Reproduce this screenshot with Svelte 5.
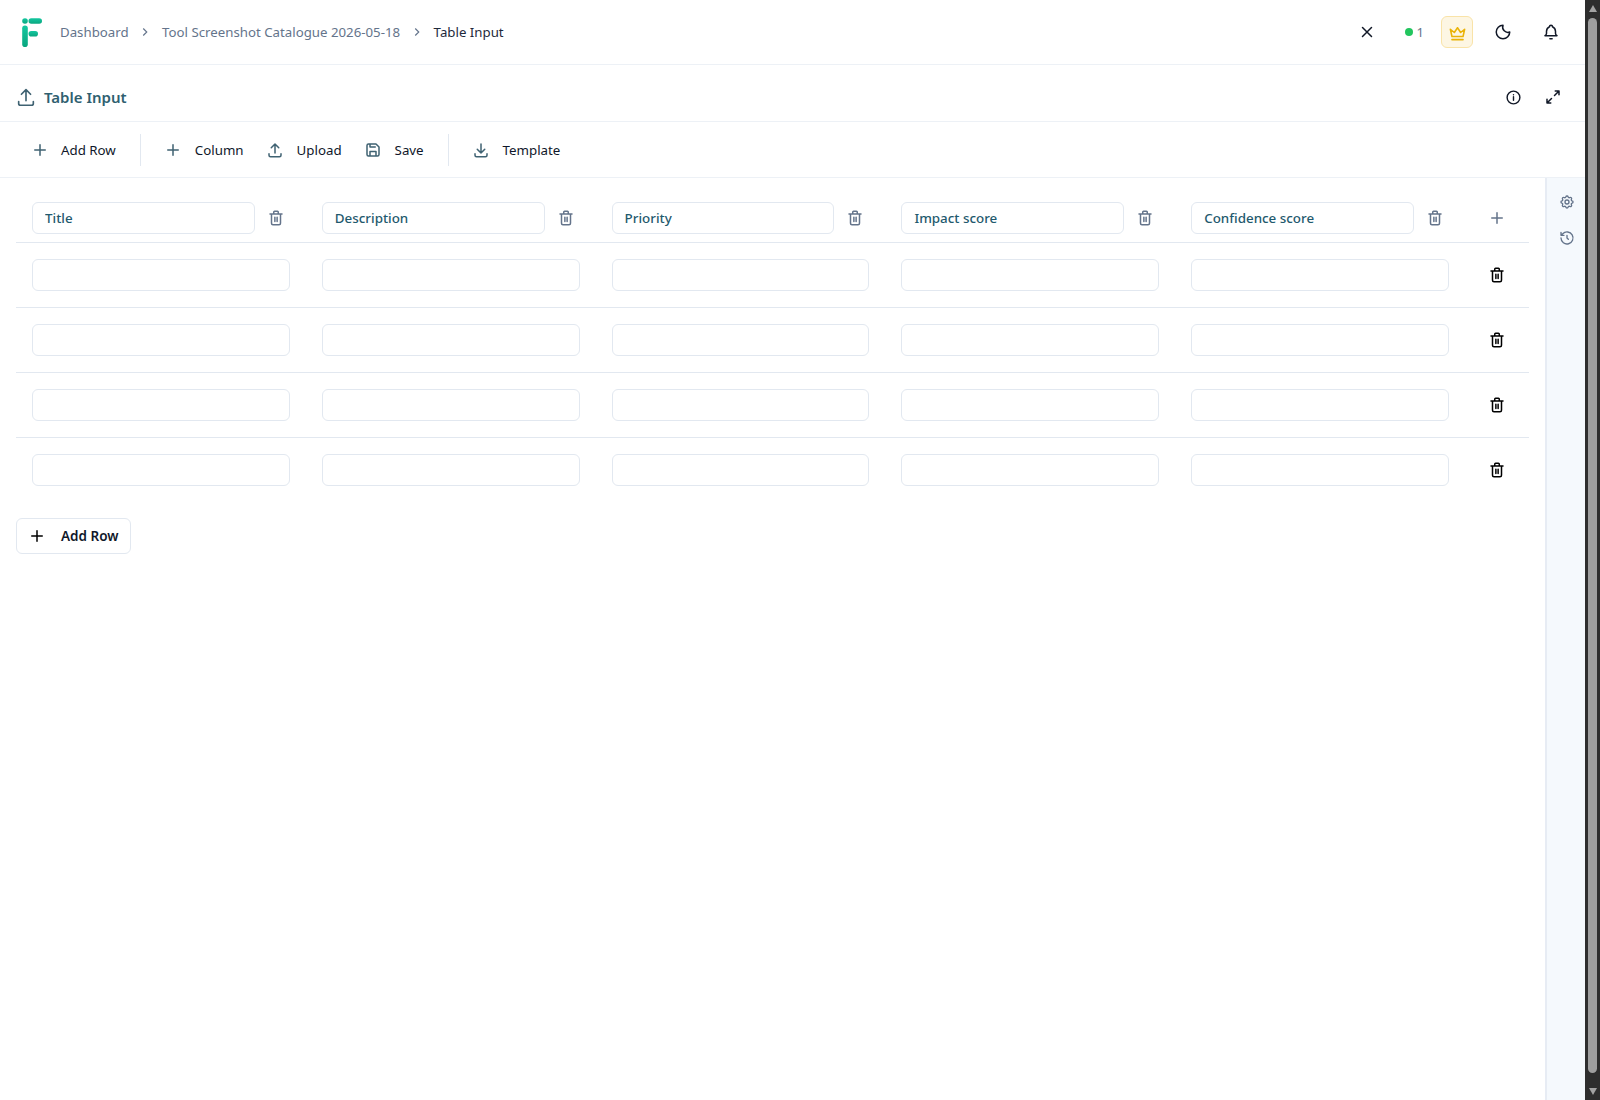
<script lang="ts">
  const crumbs = ['Dashboard', 'Tool Screenshot Catalogue 2026-05-18'];
  const columns = ['Title', 'Description', 'Priority', 'Impact score', 'Confidence score'];
  const rows = [0, 1, 2, 3];
</script>

{#snippet plus()}
  <svg class="ico" viewBox="0 0 24 24"><path d="M12 5v14M5 12h14" /></svg>
{/snippet}

{#snippet upload(cls = 'ico')}
  <svg class={cls} viewBox="0 0 24 24"><path d="M4 17v2a2 2 0 0 0 2 2h12a2 2 0 0 0 2-2v-2M7 9l5-5 5 5M12 4v12" /></svg>
{/snippet}

{#snippet trash(cls = 'ico')}
  <svg class={cls} viewBox="0 0 24 24"><path d="M4 6.5h16M9 6V4a1 1 0 0 1 1-1h4a1 1 0 0 1 1 1v2M6 6.5V19a2 2 0 0 0 2 2h8a2 2 0 0 0 2-2V6.5M10.5 11v5.5M13.5 11v5.5" /></svg>
{/snippet}

<div class="page">
  <div class="main">
    <header class="topbar">
      <svg class="logo" viewBox="0 0 20 29">
        <defs>
          <linearGradient id="lg" x1="0" y1="0" x2="0" y2="1">
            <stop offset="0" stop-color="#14c7a0" />
            <stop offset="1" stop-color="#0aa67f" />
          </linearGradient>
        </defs>
        <circle cx="3" cy="3" r="2.8" fill="url(#lg)" />
        <rect x="6.5" y="0.2" width="13.5" height="5.6" rx="2.8" fill="url(#lg)" />
        <rect x="0.2" y="7.5" width="5.6" height="21.5" rx="2.8" fill="url(#lg)" />
        <rect x="6.5" y="13" width="9.5" height="5.6" rx="2.8" fill="url(#lg)" />
      </svg>
      <nav class="crumbs">
        {#each crumbs as crumb}
          <span class="crumb">{crumb}</span>
          <svg class="chev" viewBox="0 0 24 24"><path d="M9 6l6 6-6 6" /></svg>
        {/each}
        <span class="crumb current">Table Input</span>
      </nav>
      <div class="top-actions">
        <svg class="ico dark close" viewBox="0 0 24 24"><path d="M18 6L6 18M6 6l12 12" /></svg>
        <span class="status"><i class="dot"></i>1</span>
        <span class="crown">
          <svg class="ico" viewBox="0 0 24 24"><path d="M12 6l4 6 5-4-2 9H5L3 8l5 4zM5 21h14" /></svg>
        </span>
        <svg class="ico dark moon" viewBox="0 0 24 24"><path d="M12 3a7 7 0 0 0 9 9 9 9 0 1 1-9-9z" /></svg>
        <svg class="ico dark bell" viewBox="0 0 24 24"><path d="M10 5a2 2 0 1 1 4 0 7 7 0 0 1 4 6v3a4 4 0 0 0 2 3H4a4 4 0 0 0 2-3v-3a7 7 0 0 1 4-6M10.5 21h3" /></svg>
      </div>
    </header>

    <div class="titlebar">
      {@render upload('ico title-ico')}
      <h1>Table Input</h1>
      <div class="title-actions">
        <svg class="ico dark info" viewBox="0 0 24 24"><circle cx="12" cy="12" r="9" /><path d="M12 11v5M12 8v.01" /></svg>
        <svg class="ico dark" viewBox="0 0 24 24"><path d="M15 4h5v5M20 4l-6 6M9 20H4v-5M4 20l6-6" /></svg>
      </div>
    </div>

    <div class="toolbar">
      <button class="tool">{@render plus()}Add Row</button>
      <span class="divider"></span>
      <button class="tool">{@render plus()}Column</button>
      <button class="tool">{@render upload()}Upload</button>
      <button class="tool">
        <svg class="ico" viewBox="0 0 24 24"><path d="M6 4h10l4 4v10a2 2 0 0 1-2 2H6a2 2 0 0 1-2-2V6a2 2 0 0 1 2-2zM8 20v-6h8v6M8 4v4h7" /></svg>
        Save
      </button>
      <span class="divider"></span>
      <button class="tool">
        <svg class="ico" viewBox="0 0 24 24"><path d="M4 17v2a2 2 0 0 0 2 2h12a2 2 0 0 0 2-2v-2M7 11l5 5 5-5M12 4v12" /></svg>
        Template
      </button>
    </div>

    <div class="body">
      <div class="content">
        <div class="grid head">
          {#each columns as col}
            <div class="cell">
              <input class="field head-field" value={col} />
              <button class="icon-btn">{@render trash('ico muted')}</button>
            </div>
          {/each}
          <div class="action"><button class="icon-btn">{@render plus()}</button></div>
        </div>
        {#each rows as row (row)}
          <div class="grid row">
            {#each columns as col}
              <div class="cell"><input class="field" aria-label={col} /></div>
            {/each}
            <div class="action"><button class="icon-btn">{@render trash('ico black')}</button></div>
          </div>
        {/each}
        <button class="add-row">
          <svg class="ico black" viewBox="0 0 24 24"><path d="M12 5v14M5 12h14" /></svg>
          Add Row
        </button>
      </div>
      <aside class="side">
        <svg class="ico side-ico" viewBox="0 0 24 24"><path d="M10.3 4.3c.4-1.8 3-1.8 3.4 0a1.7 1.7 0 0 0 2.6 1c1.5-.9 3.3.8 2.4 2.4a1.7 1.7 0 0 0 1 2.6c1.8.4 1.8 3 0 3.4a1.7 1.7 0 0 0-1 2.6c.9 1.5-.8 3.3-2.4 2.4a1.7 1.7 0 0 0-2.6 1c-.4 1.8-3 1.8-3.4 0a1.7 1.7 0 0 0-2.6-1c-1.5.9-3.3-.8-2.4-2.4a1.7 1.7 0 0 0-1-2.6c-1.8-.4-1.8-3 0-3.4a1.7 1.7 0 0 0 1-2.6c-.9-1.5.8-3.3 2.4-2.4 1 .6 2.3.1 2.6-1z" /><circle cx="12" cy="12" r="3" /></svg>
        <svg class="ico side-ico" viewBox="0 0 24 24"><path d="M12 8v4l2 2M3 12a9 9 0 1 0 2.6-6.4L3 8M3 3.5V8h4.5" /></svg>
      </aside>
    </div>
  </div>

  <div class="scrollbar">
    <span class="arrow up"></span>
    <span class="thumb"></span>
    <span class="arrow down"></span>
  </div>
</div>

<style>
  :global(body) {
    margin: 0;
    background: #fff;
    font-family: 'Noto Sans', 'Open Sans', sans-serif;
    color: #0f172a;
  }

  .page {
    display: flex;
    height: 1100px;
    overflow: hidden;
  }

  .main {
    flex: 1;
    min-width: 0;
    display: flex;
    flex-direction: column;
  }

  .ico {
    width: 18px;
    height: 18px;
    flex-shrink: 0;
    fill: none;
    stroke: #3f6272;
    stroke-width: 2;
    stroke-linecap: round;
    stroke-linejoin: round;
  }

  .ico.dark {
    stroke: #111827;
  }

  .ico.black {
    stroke: #000;
  }

  .ico.muted {
    stroke: #64748b;
  }

  .topbar {
    display: flex;
    align-items: center;
    height: 65px;
    box-sizing: border-box;
    padding: 0 25px 0 22px;
    border-bottom: 1px solid #edf1f6;
    flex-shrink: 0;
  }

  .logo {
    width: 20px;
    height: 29px;
    margin-right: 18px;
  }

  .crumbs {
    display: flex;
    align-items: center;
    font-size: 13.25px;
  }

  .crumb {
    color: #64748b;
  }

  .crumb.current {
    color: #1e293b;
  }

  .chev {
    width: 14px;
    height: 14px;
    margin: 0 10px 0 9.5px;
    fill: none;
    stroke: #64748b;
    stroke-width: 2;
  }

  .top-actions {
    margin-left: auto;
    display: flex;
    align-items: center;
  }

  .ico.close {
    margin-right: 29px;
  }

  .status {
    display: flex;
    align-items: center;
    gap: 4px;
    font-size: 13px;
    color: #64748b;
    margin-right: 17px;
  }

  .dot {
    width: 8px;
    height: 8px;
    border-radius: 50%;
    background: #22c55e;
  }

  .crown {
    width: 32px;
    height: 32px;
    box-sizing: border-box;
    display: flex;
    align-items: center;
    justify-content: center;
    background: #fdf6e3;
    border: 1px solid #f9e3a8;
    border-radius: 6px;
    margin-right: 21px;
  }

  .crown .ico {
    width: 19px;
    height: 19px;
    stroke: #eab308;
  }

  .moon {
    margin-right: 30px;
  }

  .titlebar {
    display: flex;
    align-items: center;
    height: 57px;
    box-sizing: border-box;
    padding: 8px 23px 0 15px;
    border-bottom: 1px solid #edf1f6;
    flex-shrink: 0;
  }

  .title-ico {
    width: 22px;
    height: 22px;
    margin-right: 7px;
    stroke-width: 1.8;
  }

  h1 {
    margin: 0;
    font-size: 15px;
    font-weight: 600;
    color: #2f5f70;
  }

  .title-actions {
    margin-left: auto;
    display: flex;
    align-items: center;
    gap: 22.5px;
  }

  .info {
    width: 17px;
    height: 17px;
  }

  .toolbar {
    display: flex;
    align-items: center;
    height: 56px;
    box-sizing: border-box;
    padding: 0 20px;
    border-bottom: 1px solid #edf1f6;
    flex-shrink: 0;
  }

  .tool {
    display: flex;
    align-items: center;
    gap: 13px;
    padding: 0 11px;
    height: 32px;
    background: none;
    border: none;
    font: inherit;
    font-size: 13.3px;
    color: #0f172a;
  }

  .tool:first-child {
    gap: 12px;
  }

  .divider {
    width: 1px;
    height: 32px;
    margin: 0 12px 0 13px;
    background: #e2e8f0;
  }

  .body {
    flex: 1;
    display: flex;
    min-height: 0;
  }

  .content {
    flex: 1;
    min-width: 0;
    padding: 8px 16px;
  }

  .grid {
    display: grid;
    grid-template-columns: repeat(5, minmax(0, 1fr)) 64px;
    align-items: center;
  }

  .head {
    padding: 16px 0 8px;
    border-bottom: 1px solid #e2e8f0;
  }

  .row {
    padding: 16px 0;
    border-bottom: 1px solid #e2e8f0;
  }

  .row:last-of-type {
    border-bottom: none;
  }

  .cell {
    display: flex;
    align-items: center;
    gap: 7px;
    padding: 0 16px;
    min-width: 0;
  }

  .action {
    display: flex;
    justify-content: center;
  }

  .field {
    flex: 1;
    min-width: 0;
    height: 32px;
    box-sizing: border-box;
    padding: 0 12px;
    background: #fff;
    border: 1px solid #e2e8f0;
    border-radius: 6px;
    font: inherit;
    font-size: 13.4px;
    color: #1f5a6e;
  }

  .head-field {
    font-weight: 500;
  }

  .icon-btn {
    display: flex;
    padding: 5px;
    background: none;
    border: none;
  }

  .action .icon-btn .ico:not(.black) {
    stroke: #64748b;
  }

  .add-row {
    display: flex;
    align-items: center;
    gap: 15px;
    height: 36px;
    margin-top: 16px;
    padding: 0 12px 0 11px;
    background: #fff;
    border: 1px solid #e2e8f0;
    border-radius: 6px;
    font: inherit;
    font-size: 13.5px;
    font-weight: 600;
    color: #0f172a;
  }

  .side {
    width: 40px;
    box-sizing: border-box;
    display: flex;
    flex-direction: column;
    align-items: center;
    gap: 20px;
    padding: 16px 0 0 2px;
    background: #f5f9fd;
    border-left: 2px solid #e7ecf4;
  }

  .ico.side-ico {
    width: 16px;
    height: 16px;
    stroke: #64748b;
  }

  .scrollbar {
    width: 15px;
    flex-shrink: 0;
    background: #2e2e2e;
    display: flex;
    flex-direction: column;
    align-items: center;
    box-sizing: border-box;
    padding: 5px 0;
  }

  .thumb {
    width: 9px;
    flex: 1;
    margin: 6px 0 15px;
    background: #9f9f9f;
    border-radius: 5px;
  }

  .arrow {
    width: 0;
    height: 0;
    border-left: 4px solid transparent;
    border-right: 4px solid transparent;
  }

  .arrow.up {
    border-bottom: 7px solid #a3a3a3;
  }

  .arrow.down {
    border-top: 7px solid #a3a3a3;
  }
</style>
